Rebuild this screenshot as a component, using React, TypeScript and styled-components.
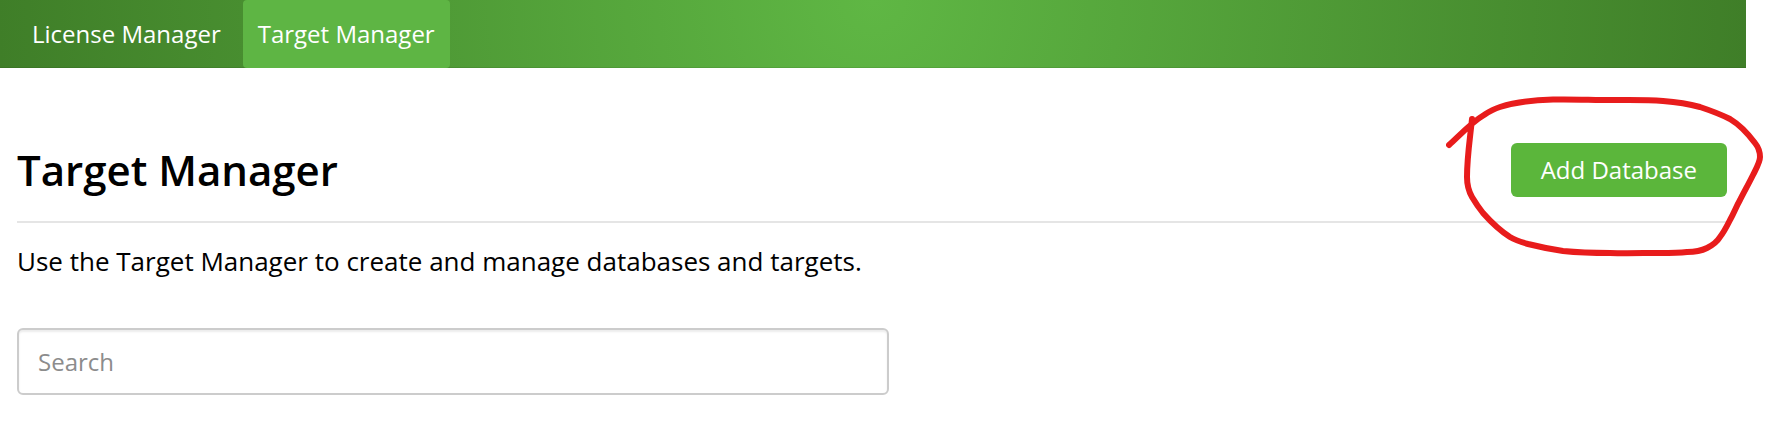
import React from "react";
import styled, { createGlobalStyle } from "styled-components";

const GlobalStyle = createGlobalStyle`
  *, *::before, *::after { box-sizing: border-box; }
  body {
    margin: 0;
    background: #fff;
    color: #000;
    font-family: "Open Sans", "Noto Sans", sans-serif;
    font-size: 24px;
    overflow-x: hidden;
  }
`;

const Page = styled.div`
  padding-right: 21px;
`;

const NavBar = styled.nav`
  display: flex;
  gap: 7px;
  padding-left: 17px;
  background: radial-gradient(circle at 50% 0, #5fb744 0%, #3f7e28 100%);
  box-shadow: inset 0 -1px 0 rgba(0, 0, 0, 0.08);
`;

const NavLink = styled.a<{ $active?: boolean }>`
  padding: 0 15px;
  border-radius: 4px;
  background: ${({ $active }) => ($active ? "#5eb544" : "transparent")};
  color: #fff;
  line-height: 68px;
  text-decoration: none;
  white-space: nowrap;
`;

const Main = styled.main`
  padding: 75px 19px 32px 17px;
`;

const Header = styled.header`
  display: flex;
  align-items: center;
  justify-content: space-between;
  padding-bottom: 24px;
  border-bottom: 2px solid #e5e5e5;
`;

const Title = styled.h1`
  margin: 0;
  font-size: 42px;
  font-weight: 600;
  line-height: 54px;
`;

const Highlighted = styled.div`
  position: relative;
`;

const AddButton = styled.button`
  display: block;
  padding: 0 30px;
  border: 0;
  border-radius: 6px;
  background: #5bb63b;
  color: #fff;
  font: inherit;
  line-height: 54px;
  cursor: pointer;
`;

const Marker = styled.svg`
  position: absolute;
  top: -49px;
  right: -39px;
  width: 320px;
  height: 166px;
  pointer-events: none;
`;

const Intro = styled.p`
  margin: 20px 0 48px;
  font-size: 26px;
  line-height: 37px;
`;

const SearchInput = styled.input`
  display: block;
  width: 51%;
  height: 67px;
  padding: 0 19px;
  border: 2px solid #ccc;
  border-radius: 6px;
  box-shadow: inset 0 2px 2px rgba(0, 0, 0, 0.075);
  color: #000;
  font: inherit;

  &::placeholder {
    color: #8c8c8c;
    opacity: 1;
  }
`;

export default function App() {
  return (
    <>
      <GlobalStyle />
      <Page>
        <NavBar>
          <NavLink href="#license-manager">License Manager</NavLink>
          <NavLink href="#target-manager" $active aria-current="page">
            Target Manager
          </NavLink>
        </NavBar>
        <Main>
          <Header>
            <Title>Target Manager</Title>
            <Highlighted>
              <AddButton type="button">Add Database</AddButton>
              <Marker viewBox="0 0 320 166" aria-hidden="true">
                <path
                  d="M3 51 C16 39 26 28 38 21 C44 17 49 14.500 54 13 C72 7.500 90 6 107 5.500 C127 5 146 6 166 6 C184 6 200 5.500 217 7 C230 8 243 10 254 13 C266 17 276 21 284 25 C294 31 303 41 309 49 C313 54 314 58 314 63 C314 68 311 73 307 81 C302 91 298 98 294 106 C290 113 288 119 284 126 C281 132 278 138 274 143 C271 148 267 151 261 154 C255 157 248 158 241 158 C232 159 223 159 214 159 C198 159 180 159.500 164 159 C148 159 132 158.500 117 157 C103 155 90 152 82 150 C75 148 69 146 64 143 C53 136 45 128 37 119 C33 114 29 108 26 103 C22 96 21 90 21 83 C21 63 24 45 26 25"
                  fill="none"
                  stroke="#e81c1c"
                  strokeWidth="6"
                  strokeLinecap="round"
                  strokeLinejoin="round"
                />
              </Marker>
            </Highlighted>
          </Header>
          <Intro>Use the Target Manager to create and manage databases and targets.</Intro>
          <SearchInput type="search" placeholder="Search" aria-label="Search" />
        </Main>
      </Page>
    </>
  );
}
